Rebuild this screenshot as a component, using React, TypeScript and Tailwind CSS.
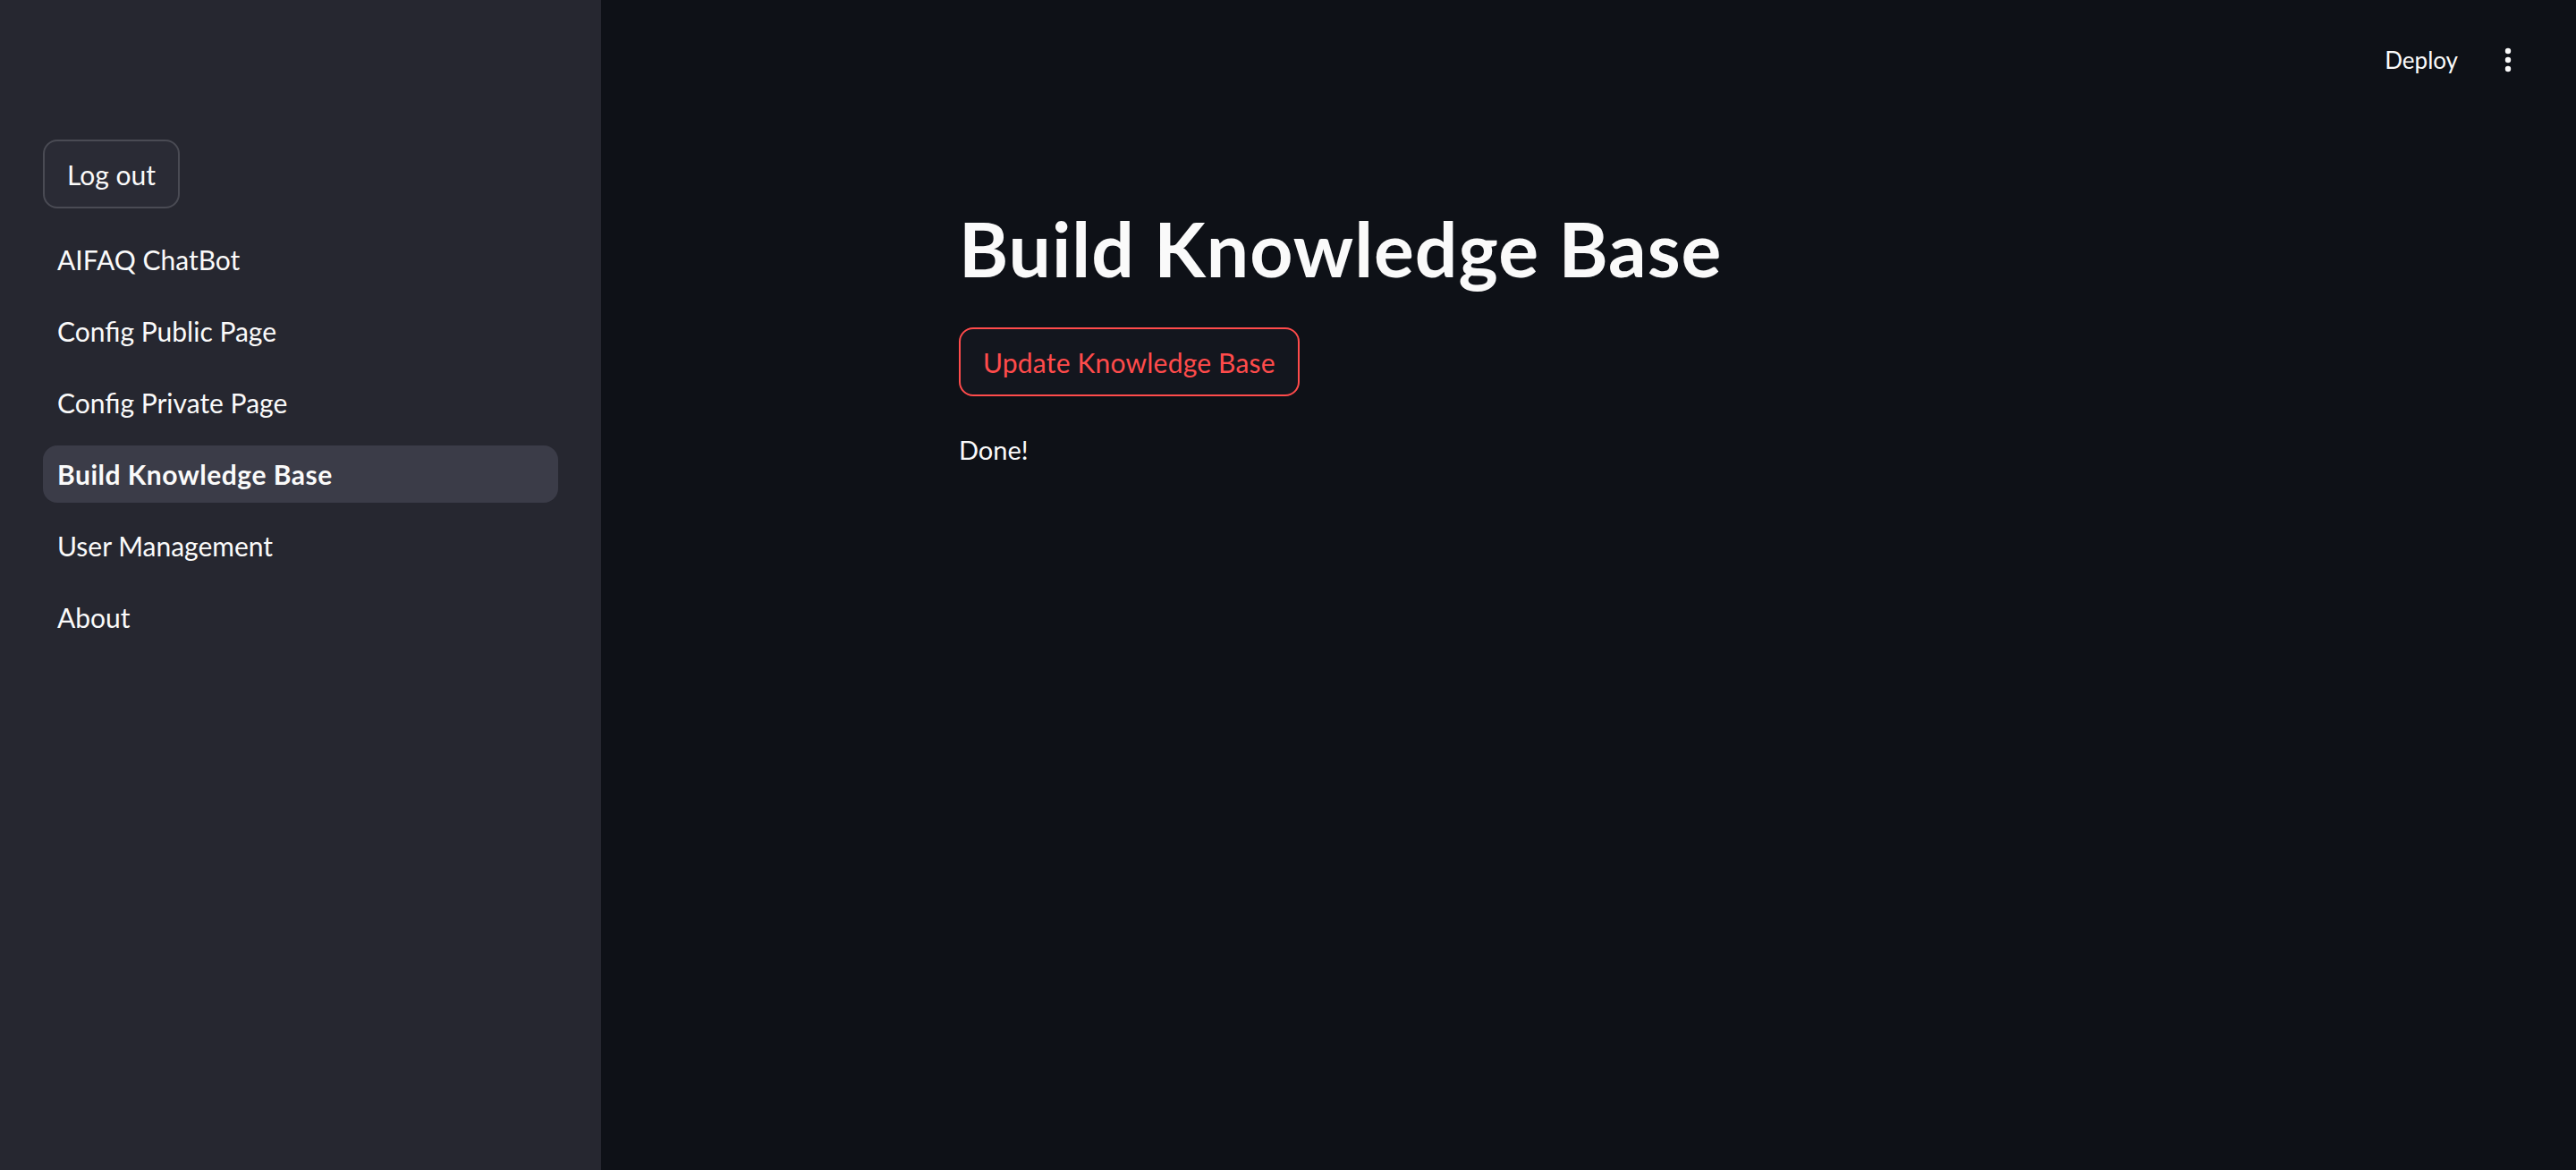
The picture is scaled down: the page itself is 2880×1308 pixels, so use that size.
import React from "react";
import clsx from "clsx";

const navItems = [
  "AIFAQ ChatBot",
  "Config Public Page",
  "Config Private Page",
  "Build Knowledge Base",
  "User Management",
  "About",
];

const activePage = "Build Knowledge Base";

const KebabIcon = () => (
  <svg width="12" height="30" viewBox="0 0 12 30" fill="#fafafa">
    <circle cx="6" cy="5" r="3.2" />
    <circle cx="6" cy="15" r="3.2" />
    <circle cx="6" cy="25" r="3.2" />
  </svg>
);

export default function App() {
  return (
    <div className="flex h-[1308px] w-full font-['Lato',sans-serif] text-[#fafafa]">
      <aside className="w-[672px] shrink-0 bg-[#262730] px-[48px] pt-[156px]">
        <button className="h-[77px] rounded-[16px] border-2 border-[#4a4b54] bg-[#2a2b35] px-[25px] text-[30px] leading-none">
          Log out
        </button>

        <nav className="mt-[25px] flex w-[576px] flex-col gap-[16px]">
          {navItems.map((item) => (
            <div
              key={item}
              className={clsx(
                "flex h-[64px] items-center rounded-[16px] px-[16px] text-[30px] leading-none",
                item === activePage && "bg-[#3b3c48] font-bold tracking-[0.5px]"
              )}
            >
              {item}
            </div>
          ))}
        </nav>
      </aside>

      <main className="flex flex-1 flex-col bg-[#0e1117]">
        <header className="flex h-[134px] items-center justify-end gap-[50px] pr-[70px]">
          <span className="text-[26px] leading-none">Deploy</span>
          <KebabIcon />
        </header>

        <div className="mx-auto w-full max-w-[1472px] px-[32px]">
          <h1 className="mt-[102px] text-[84px] font-bold leading-none tracking-[1px]">
            Build Knowledge Base
          </h1>
          <button className="mt-[46px] h-[77px] rounded-[16px] border-2 border-[#ff4b4b] bg-[#13161e] px-[25px] text-[30px] leading-none tracking-[0.2px] text-[#ff4b4b]">
            Update Knowledge Base
          </button>
          <p className="mt-[45px] text-[29px] leading-none">Done!</p>
        </div>
      </main>
    </div>
  );
}
